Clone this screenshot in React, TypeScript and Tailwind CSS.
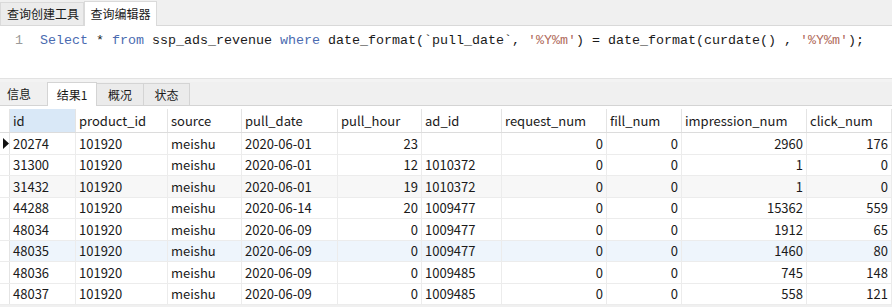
import React from "react";

const cols = [
  { key: "id", w: 66, right: false },
  { key: "product_id", w: 92, right: false },
  { key: "source", w: 74, right: false },
  { key: "pull_date", w: 96, right: false },
  { key: "pull_hour", w: 84, right: true },
  { key: "ad_id", w: 80, right: false },
  { key: "request_num", w: 105, right: true },
  { key: "fill_num", w: 75, right: true },
  { key: "impression_num", w: 125, right: true },
  { key: "click_num", w: 85, right: true },
];

const rows = [
  ["20274", "101920", "meishu", "2020-06-01", "23", "", "0", "0", "2960", "176"],
  ["31300", "101920", "meishu", "2020-06-01", "12", "1010372", "0", "0", "1", "0"],
  ["31432", "101920", "meishu", "2020-06-01", "19", "1010372", "0", "0", "1", "0"],
  ["44288", "101920", "meishu", "2020-06-14", "20", "1009477", "0", "0", "15362", "559"],
  ["48034", "101920", "meishu", "2020-06-09", "0", "1009477", "0", "0", "1912", "65"],
  ["48035", "101920", "meishu", "2020-06-09", "0", "1009477", "0", "0", "1460", "80"],
  ["48036", "101920", "meishu", "2020-06-09", "0", "1009485", "0", "0", "745", "148"],
  ["48037", "101920", "meishu", "2020-06-09", "0", "1009485", "0", "0", "558", "121"],
];

const rowBg = ["bg-white", "bg-white", "bg-[#f7f7f7]", "bg-white", "bg-white", "bg-[#eef5fc]", "bg-white", "bg-white"];

export default function App() {
  const font = { fontFamily: '"Noto Sans CJK SC", "Noto Sans", sans-serif' };
  return (
    <div className="w-[892px] h-[307px] overflow-hidden bg-[#f0f0f0] text-[#1a1a1a]" style={font}>
      {/* top tabs */}
      <div className="flex h-[26px] items-end border-b border-[#d9d9d9] bg-[#f0f0f0]">
        <div className="flex h-[23px] w-[84px] items-center justify-center border border-b-0 border-[#dadada] bg-[#ececec] pl-[2px] text-[12px]">
          查询创建工具
        </div>
        <div className="-mb-px flex h-[25px] w-[73px] items-center justify-center border border-b-0 border-[#dadada] bg-white text-[12px]">
          查询编辑器
        </div>
      </div>
      {/* editor */}
      <div className="h-[52px] bg-white pt-[7px]">
        <div
          className="flex text-[13.33px] leading-[16px] whitespace-pre"
          style={{ fontFamily: '"Liberation Mono", monospace' }}
        >
          <span className="w-[40px] pl-[15px] text-[#9a9a9a]">1</span>
          <span>
            <span className="text-[#4a6bb0]">Select</span>
            <span> * </span>
            <span className="text-[#4a6bb0]">from</span>
            <span> ssp_ads_revenue </span>
            <span className="text-[#4a6bb0]">where</span>
            <span> date_format(`pull_date`, </span>
            <span className="text-[#b06a5a]">'%Y%m'</span>
            <span>) = date_format(curdate() , </span>
            <span className="text-[#b06a5a]">'%Y%m'</span>
            <span>);</span>
          </span>
        </div>
      </div>
      {/* separator */}
      <div className="h-[4px] border-t border-[#e2e2e2] bg-[#f3f3f3]" />
      {/* bottom tabs */}
      <div className="flex h-[24px] items-end border-b border-[#d4d4d4] bg-[#f0f0f0]">
        <div className="flex h-[22px] w-[47px] items-center pl-[7px] text-[12px]">信息</div>
        <div className="-mb-px flex h-[24px] w-[50px] items-center justify-center border border-b-0 border-[#d4d4d4] bg-white text-[12px]">
          结果1
        </div>
        <div className="flex h-[22px] w-[47px] items-center justify-center border-r border-t border-[#d4d4d4] bg-[#ebebeb] text-[12px]">
          概况
        </div>
        <div className="flex h-[22px] w-[46px] items-center justify-center border-r border-t border-[#d4d4d4] bg-[#ebebeb] text-[12px]">
          状态
        </div>
      </div>
      {/* grid */}
      <div className="bg-white pt-[3px] text-[13px]">
        <div className="flex h-[24px] border-b border-[#dcdcdc]">
          <div className="w-[10px] shrink-0 border-r border-[#e4e4e4]" />
          {cols.map((c, i) => (
            <div
              key={c.key}
              className={`flex shrink-0 items-center border-r border-[#e4e4e4] px-[3px] ${i === 0 ? "bg-[#d9e8f7]" : "bg-white"}`}
              style={{ width: c.w }}
            >
              {c.key}
            </div>
          ))}
        </div>
        {rows.map((r, ri) => (
          <div key={ri} className={`flex h-[21.5px] border-b border-[#ececec] ${rowBg[ri]}`}>
            <div className="relative w-[10px] shrink-0 border-r border-[#e4e4e4] bg-white">
              {ri === 0 && (
                <svg className="absolute left-[2px] top-[5px]" width="7" height="11" viewBox="0 0 7 11">
                  <path d="M1 0 L7 5.5 L1 11 Z" fill="#111" />
                </svg>
              )}
            </div>
            {cols.map((c, ci) => (
              <div
                key={c.key}
                className={`flex shrink-0 items-center border-r border-[#ececec] px-[3px] ${c.right ? "justify-end" : ""}`}
                style={{ width: c.w }}
              >
                {r[ci]}
              </div>
            ))}
          </div>
        ))}
      </div>
    </div>
  );
}
